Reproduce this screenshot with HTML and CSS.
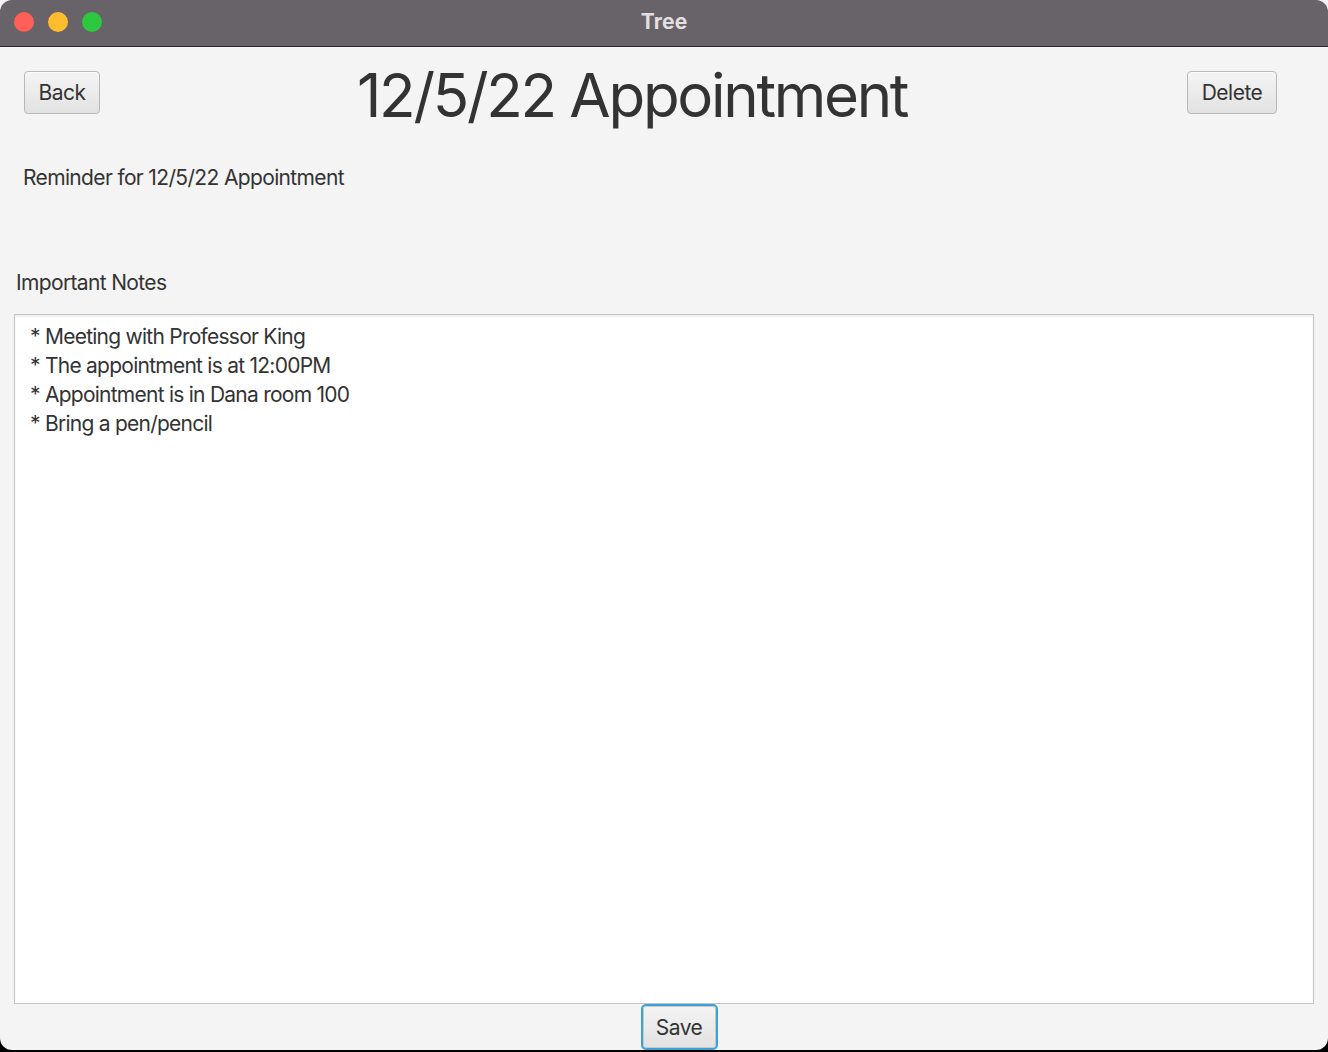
FILE: index.html
```html
<!DOCTYPE html>
<html>
<head>
<meta charset="utf-8">
<link rel="stylesheet" href="styles.css">
</head>
<body>
<div class="window">
  <div class="titlebar">
    <div class="lights">
      <span class="light red"></span>
      <span class="light yellow"></span>
      <span class="light green"></span>
    </div>
    <div class="wintitle">Tree</div>
  </div>
  <div class="content">
    <div class="header">
      <button class="btn back">Back</button>
      <h1 class="title">12/5/22 Appointment</h1>
      <div class="spacer"></div>
      <button class="btn delete">Delete</button>
    </div>
    <div class="reminder">Reminder for 12/5/22 Appointment</div>
    <div class="notes-label">Important Notes</div>
    <div class="notes">
      <div class="line">* Meeting with Professor King</div>
      <div class="line">* The appointment is at 12:00PM</div>
      <div class="line">* Appointment is in Dana room 100</div>
      <div class="line">* Bring a pen/pencil</div>
    </div>
    <div class="footer">
      <button class="btn save">Save</button>
    </div>
  </div>
</div>
</body>
</html>
```
FILE: styles.css
```css
html, body {
  margin: 0;
  padding: 0;
  width: 1328px;
  height: 1052px;
  overflow: hidden;
  background: linear-gradient(#f2f2f2 0, #f2f2f2 500px, #000 500px, #000 100%);
  font-family: Inter, "Noto Sans", sans-serif;
}
.window {
  width: 1328px;
  height: 1050px;
  background: #f4f4f4;
  border-radius: 12px;
  overflow: hidden;
  display: flex;
  flex-direction: column;
}
.titlebar {
  height: 46px;
  background: #686368;
  border-bottom: 1px solid #2a2a2a;
  position: relative;
  display: flex;
  align-items: center;
  justify-content: center;
  flex: none;
}
.lights {
  position: absolute;
  left: 14px;
  top: 12px;
  display: flex;
  gap: 14px;
}
.light {
  width: 20px;
  height: 20px;
  border-radius: 50%;
  display: block;
}
.red { background: #fe5f57; }
.yellow { background: #febc2e; }
.green { background: #2cc840; }
.wintitle {
  color: #e2dfe2;
  font-weight: 700;
  font-size: 21px;
  letter-spacing: 0.2px;
  margin-top: -3px;
}
.content {
  flex: 1;
  display: flex;
  flex-direction: column;
  padding: 0 14px 0 14px;
}
.header {
  display: flex;
  align-items: center;
  margin-top: 24px;
  height: 43px;
}
.btn {
  font-family: Inter, "Noto Sans", sans-serif;
  font-size: 21px;
  color: #333;
  height: 43px;
  padding: 0 10px;
  border: 1px solid #b8b8b8;
  border-radius: 4px;
  background: linear-gradient(#f4f4f4, #e2e2e2);
  box-shadow: 0 1px 0 #fafafa inset;
  letter-spacing: -0.5px;
}
.back { margin-left: 10px; width: 76px; }
.delete { width: 90px; margin-right: 37px; }
.title {
  margin: 0 0 0 257px;
  font-weight: 400;
  font-size: 60px;
  color: #333;
  letter-spacing: -2.3px;
  line-height: 1;
  position: relative;
  top: 2px;
  white-space: nowrap;
}
.spacer { flex: 1; }
.reminder {
  margin: 50px 0 0 9px;
  font-size: 21px;
  color: #333;
  letter-spacing: -0.65px;
  line-height: 28px;
}
.notes-label {
  margin: 77px 0 0 2px;
  font-size: 21px;
  color: #333;
  letter-spacing: -0.65px;
  line-height: 28px;
}
.notes {
  margin-top: 17px;
  width: 1300px;
  height: 690px;
  background: #fff;
  border: 1px solid #c4c4c4;
  box-shadow: inset 0 2px 2px rgba(0,0,0,0.06);
  padding: 7px 0 0 15px;
  box-sizing: border-box;
  flex: none;
}
.line {
  font-size: 21px;
  color: #333;
  line-height: 29px;
  letter-spacing: -0.75px;
}
.footer {
  display: flex;
  justify-content: center;
  margin-top: 0;
}
.save {
  width: 77px;
  height: 46px;
  margin-left: 30px;
  border: 2px solid #3ea2d8;
  border-radius: 5px;
  box-shadow: inset 0 0 0 1px #c8c8c8;
}
```
